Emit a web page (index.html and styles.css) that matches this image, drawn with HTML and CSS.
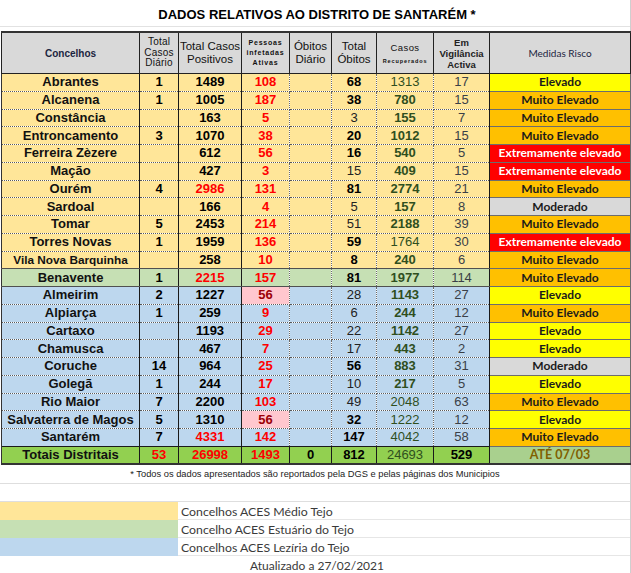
FILE: index.html
```html
<!DOCTYPE html>
<html lang="pt">
<head>
<meta charset="utf-8">
<title>Dados relativos ao Distrito de Santarém</title>
<link rel="stylesheet" href="styles.css">
</head>
<body>
<div class="page">
  <div class="title">DADOS RELATIVOS AO DISTRITO DE SANTARÉM *</div>
  <table class="grid">
    <colgroup>
      <col class="c1"><col class="c2"><col class="c3"><col class="c4"><col class="c5"><col class="c6"><col class="c7"><col class="c8"><col class="c9">
    </colgroup>
    <thead>
      <tr>
        <th class="h-conc">Concelhos</th>
        <th class="h-narrow">Total<br>Casos<br>Diário</th>
        <th class="h-big">Total Casos<br>Positivos</th>
        <th class="h-tiny">Pessoas<br>infetadas<br>Ativas</th>
        <th class="h-big">Óbitos<br>Diário</th>
        <th class="h-big">Total<br>Óbitos</th>
        <th class="h-rec"><span class="rc1">Casos</span><br><span class="rc2">Recuperados</span></th>
        <th class="h-vig">Em<br>Vigilância<br>Activa</th>
        <th class="h-med">Medidas Risco</th>
      </tr>
    </thead>
    <tbody>
      <tr class="y"><td class="n">Abrantes</td><td>1</td><td>1489</td><td class="r">108</td><td></td><td>68</td><td class="g rg">1313</td><td class="v">17</td><td class="m el">Elevado</td></tr>
      <tr class="y"><td class="n">Alcanena</td><td>1</td><td>1005</td><td class="r">187</td><td></td><td>38</td><td class="g">780</td><td class="v">15</td><td class="m me">Muito Elevado</td></tr>
      <tr class="y"><td class="n">Constância</td><td></td><td>163</td><td class="r">5</td><td></td><td class="rg">3</td><td class="g">155</td><td class="v">7</td><td class="m me">Muito Elevado</td></tr>
      <tr class="y"><td class="n">Entroncamento</td><td>3</td><td>1070</td><td class="r">38</td><td></td><td>20</td><td class="g">1012</td><td class="v">15</td><td class="m me">Muito Elevado</td></tr>
      <tr class="y"><td class="n">Ferreira Zèzere</td><td></td><td>612</td><td class="r">56</td><td></td><td>16</td><td class="g">540</td><td class="v">5</td><td class="m ex">Extremamente elevado</td></tr>
      <tr class="y"><td class="n">Mação</td><td></td><td>427</td><td class="r">3</td><td></td><td class="rg">15</td><td class="g">409</td><td class="v">15</td><td class="m ex">Extremamente elevado</td></tr>
      <tr class="y"><td class="n">Ourém</td><td>4</td><td class="r">2986</td><td class="r">131</td><td></td><td>81</td><td class="g">2774</td><td class="v">21</td><td class="m me">Muito Elevado</td></tr>
      <tr class="y"><td class="n">Sardoal</td><td></td><td>166</td><td class="r">4</td><td></td><td class="rg">5</td><td class="g">157</td><td class="v">8</td><td class="m mo">Moderado</td></tr>
      <tr class="y"><td class="n">Tomar</td><td>5</td><td>2453</td><td class="r">214</td><td></td><td class="rg">51</td><td class="g">2188</td><td class="v">39</td><td class="m me">Muito Elevado</td></tr>
      <tr class="y"><td class="n">Torres Novas</td><td>1</td><td>1959</td><td class="r">136</td><td></td><td>59</td><td class="g rg">1764</td><td class="v">30</td><td class="m ex">Extremamente elevado</td></tr>
      <tr class="y last"><td class="n sm">Vila Nova Barquinha</td><td></td><td>258</td><td class="r">10</td><td></td><td>8</td><td class="g">240</td><td class="v">6</td><td class="m me">Muito Elevado</td></tr>
      <tr class="gr last"><td class="n">Benavente</td><td>1</td><td class="r">2215</td><td class="r">157</td><td></td><td>81</td><td class="g">1977</td><td class="v">114</td><td class="m me">Muito Elevado</td></tr>
      <tr class="b"><td class="n">Almeirim</td><td>2</td><td>1227</td><td class="pk">56</td><td></td><td class="rg">28</td><td class="g">1143</td><td class="v">27</td><td class="m el">Elevado</td></tr>
      <tr class="b"><td class="n">Alpiarça</td><td>1</td><td>259</td><td class="r">9</td><td></td><td class="rg">6</td><td class="g">244</td><td class="v">12</td><td class="m me">Muito Elevado</td></tr>
      <tr class="b"><td class="n">Cartaxo</td><td></td><td>1193</td><td class="r">29</td><td></td><td class="rg">22</td><td class="g">1142</td><td class="v">27</td><td class="m el">Elevado</td></tr>
      <tr class="b"><td class="n">Chamusca</td><td></td><td>467</td><td class="r">7</td><td></td><td class="rg">17</td><td class="g">443</td><td class="v">2</td><td class="m el">Elevado</td></tr>
      <tr class="b"><td class="n">Coruche</td><td>14</td><td>964</td><td class="r">25</td><td></td><td>56</td><td class="g">883</td><td class="v">31</td><td class="m mo">Moderado</td></tr>
      <tr class="b"><td class="n">Golegã</td><td>1</td><td>244</td><td class="r">17</td><td></td><td class="rg">10</td><td class="g">217</td><td class="v">5</td><td class="m el">Elevado</td></tr>
      <tr class="b"><td class="n">Rio Maior</td><td>7</td><td>2200</td><td class="r">103</td><td></td><td class="rg">49</td><td class="g rg">2048</td><td class="v">63</td><td class="m me">Muito Elevado</td></tr>
      <tr class="b"><td class="n">Salvaterra de Magos</td><td>5</td><td>1310</td><td class="pk">56</td><td></td><td>32</td><td class="g rg">1222</td><td class="v">12</td><td class="m el">Elevado</td></tr>
      <tr class="b"><td class="n">Santarém</td><td>7</td><td class="r">4331</td><td class="r">142</td><td></td><td>147</td><td class="g rg">4042</td><td class="v">58</td><td class="m me">Muito Elevado</td></tr>
      <tr class="tot"><td class="n">Totais Distritais</td><td class="r">53</td><td class="r">26998</td><td class="r">1493</td><td>0</td><td>812</td><td class="g rg">24693</td><td>529</td><td class="m ate">ATÉ 07/03</td></tr>
    </tbody>
  </table>
  <div class="note">* Todos os dados apresentados são reportados pela DGS e pelas páginas dos Municipios</div>
  <div class="blank"></div>
  <div class="legend">
    <div class="lrow"><span class="sw sw-y"></span><span class="lt">Concelhos ACES Médio Tejo</span></div>
    <div class="lrow"><span class="sw sw-g"></span><span class="lt">Concelho ACES Estuário do Tejo</span></div>
    <div class="lrow"><span class="sw sw-b"></span><span class="lt">Concelhos ACES Lezíria do Tejo</span></div>
  </div>
  <div class="updated">Atualizado a 27/02/2021</div>
</div>
</body>
</html>
```
FILE: styles.css
```css
html, body {
  margin: 0;
  padding: 0;
  background: #ffffff;
}
body {
  font-family: "Liberation Sans", Arial, sans-serif;
  color: #000;
  width: 631px;
  height: 573px;
  overflow: hidden;
}
.page {
  width: 630px;
  border-right: 1px solid #cfcfcf;
  height: 573px;
}
.title {
  height: 26px;
  line-height: 30px;
  text-align: center;
  font-weight: bold;
  font-size: 13px;
  border-bottom: 1px solid #e2e2e2;
  margin-bottom: 4px;
  padding-left: 4px;
}
.grid {
  border-collapse: collapse;
  table-layout: fixed;
  width: 629px;
  margin-left: 1px;
}
.c1 { width: 138px; }
.c2 { width: 39px; }
.c3 { width: 63px; }
.c4 { width: 48px; }
.c5 { width: 42px; }
.c6 { width: 45px; }
.c7 { width: 57px; }
.c8 { width: 56px; }
.c9 { width: 141px; }

.grid th {
  background: #d9d9d9;
  height: 40px;
  padding: 0;
  border: 1px solid #222;
  border-top: 2px solid #333;
  vertical-align: middle;
  text-align: center;
  font-weight: normal;
  color: #111;
}
.h-conc { font-size: 10px; font-weight: bold !important; color: #1c2540 !important; }
.h-narrow { font-size: 10px; line-height: 10.5px; letter-spacing: 0.2px; }
.h-big { font-size: 11.5px; line-height: 13px; }
.h-tiny { font-size: 7px; line-height: 10px; font-weight: bold !important; letter-spacing: 0.8px; }
.h-rec { line-height: 10px; }
.rc1 { font-size: 9.5px; letter-spacing: 0.4px; }
.rc2 { font-size: 5.5px; font-weight: bold; letter-spacing: 0.9px; }
.h-vig { font-size: 9.5px; line-height: 11px; font-weight: bold !important; color: #222 !important; }
.h-med { font-size: 10px; font-family: Lato, "Liberation Sans", sans-serif; color: #1c2540 !important; }

.grid td {
  height: 16.75px;
  padding: 0;
  text-align: center;
  vertical-align: middle;
  font-size: 13px;
  line-height: 14px;
  font-weight: bold;
  white-space: nowrap;
  overflow: hidden;
  border-bottom: 1px dotted #5a5a5a;
  border-right: 1px dotted #6a6a6a;
}
.grid td:nth-child(1),
.grid td:nth-child(2),
.grid td:nth-child(3) { border-right: 1px solid #1a1a1a; }
.grid td:nth-child(1) { border-left: 1px solid #333; }
.grid td:nth-child(8) { border-right: 1px solid #1a1a1a; }

tr.y td { background: #ffe699; }
tr.gr td { background: #c6e0b4; }
tr.b td { background: #bdd7ee; }
tr.last td { border-bottom: 1px solid #505050; }

.n { color: #111; }
.sm { font-size: 11.8px !important; }
.r { color: #ff0000; }
.pk { background: #ffc7ce !important; color: #9c0006; }
.g { color: #2f4f1e; }
.rg { font-weight: normal !important; }
td.rg:not(.g) { color: #222; }
.v { font-weight: normal !important; color: #3a3f47; }

.grid td.m {
  font-family: Lato, "Liberation Sans", sans-serif;
  font-size: 12px;
  font-weight: bold;
  color: #1b1b1b;
  border: 1px solid #6d6d6d;
}
.el { background: #ffff00 !important; }
.me { background: #ffc000 !important; }
.ex { background: #ff0000 !important; color: #ffffff !important; }
.mo { background: #d9d9d9 !important; }

tr.tot td {
  background: #92d050;
  border-top: 1px solid #1a1a1a;
  border-bottom: 2px solid #333;
  border-right: 1px solid #1a1a1a;
  height: 16px;
}
tr.tot td.ate {
  background: #a9d08e;
  color: #806000;
  font-size: 12.5px;
  border-bottom: 2px solid #333;
}

.note {
  height: 18px;
  line-height: 19px;
  text-align: center;
  font-size: 9.3px;
  color: #222;
  border-bottom: 1px solid #dedede;
}
.blank {
  height: 17px;
  border-bottom: 1px solid #dedede;
}
.legend {
  display: flex;
  flex-direction: column;
}
.lrow {
  display: flex;
  height: 18px;
}
.sw {
  width: 178px;
  flex: none;
}
.sw-y { background: #ffe699; }
.sw-g { background: #c6e0b4; }
.sw-b { background: #bdd7ee; }
.lt {
  flex: 1;
  padding-left: 3px;
  font-family: Lato, "Liberation Sans", sans-serif;
  font-size: 12.3px;
  line-height: 19px;
  color: #3a3a3a;
  border-bottom: 1px solid #e6e6e6;
  box-sizing: border-box;
}
.updated {
  height: 18px;
  line-height: 20px;
  text-align: center;
  font-family: Lato, "Liberation Sans", sans-serif;
  font-size: 12px;
  color: #3a3a3a;
  padding-left: 4px;
}
```
